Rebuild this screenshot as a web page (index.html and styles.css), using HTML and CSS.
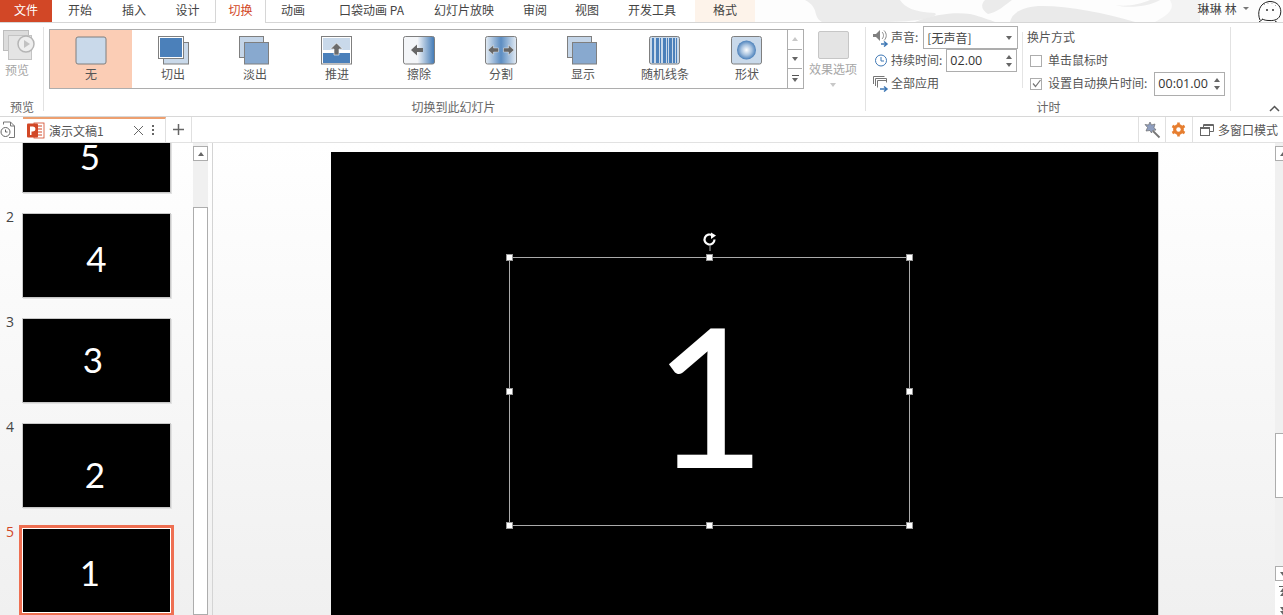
FILE: index.html
```html
<!DOCTYPE html>
<html lang="zh">
<head>
<meta charset="utf-8">
<title>演示文稿1</title>
<link rel="stylesheet" href="styles.css">
</head>
<body>
<div class="app">
  <header class="tabbar">
    <svg class="ink" width="450" height="22" viewBox="0 0 450 22"><path d="M55 0H150C155 8 165 12 185 13C190 17 170 22 130 22H72C62 16 70 8 55 0Z" fill="#ececec"/><path d="M165 22C185 14 205 12 220 14C232 17 240 20 245 22Z" fill="#e9e9e9"/><path d="M235 0H262C255 5 248 12 238 14C232 10 230 5 235 0Z" fill="#ebebeb"/><path d="M260 22C262 12 275 6 292 6C320 6 355 13 385 22Z" fill="#eaeaea"/><path d="M365 5C378 7 390 4 400 0H410C400 6 380 9 365 5Z" fill="#ededed"/><path d="M420 0H450V22H405C420 14 425 8 420 0Z" fill="#f3f3f3"/></svg>
    <div class="tab tab-file">文件</div>
    <div class="tab w-start">开始</div>
    <div class="tab w-insert">插入</div>
    <div class="tab w-design">设计</div>
    <div class="tab tab-active">切换</div>
    <div class="tab w-anim">动画</div>
    <div class="tab w-pocket">口袋动画 PA</div>
    <div class="tab w-show">幻灯片放映</div>
    <div class="tab w-review">审阅</div>
    <div class="tab w-view">视图</div>
    <div class="tab w-dev">开发工具</div>
    <div class="tab tab-format">格式</div>
    <div class="user">
      <span class="user-name">琳琳 林</span>
      <span class="user-caret"></span>
      <svg class="avatar" width="25" height="23" viewBox="0 0 25 23"><path d="M3 20C0 13 2 3 12 1.500C21 1 25 8 23.500 14C22.500 19 18 21 12 20.500C9 20.500 7 20 5.500 19" fill="#fff" stroke="#222" stroke-width="1"/><path d="M2 22l4-3M18 21l3 2" stroke="#222"/><circle cx="10" cy="10" r="1" fill="#333"/><circle cx="16" cy="10" r="1" fill="#333"/><path d="M7 4l1 1M11 3v1M15 3v1M19 5l-1 1" stroke="#888" stroke-width=".7"/></svg>
    </div>
  </header>

  <section class="ribbon">
    <div class="group group-preview">
      <div class="group-body preview-body">
        <svg width="32" height="31" viewBox="0 0 32 31"><rect x=".5" y=".5" width="25" height="20" fill="#dcdcdc" stroke="#bdbdbd"/><rect x="5.500" y="5.500" width="23" height="24" fill="#e4e4e4" stroke="#c4c4c4"/><circle cx="23" cy="14" r="8" fill="#eee" stroke="#b5b5b5" stroke-width="1.500"/><path d="M21 10l6 4-6 4z" fill="#c2c2c2"/></svg>
        <span class="muted-label">预览</span>
      </div>
      <div class="group-label">预览</div>
    </div>

    <div class="group group-gallery">
      <div class="group-body gallery-row">
        <div class="gallery">
          <div class="g-item g-selected">
            <svg width="32" height="29" viewBox="0 0 32 29"><rect x="1" y="1" width="30" height="27" rx="2" fill="#c9d9ea" stroke="#7f7f7f"/></svg>
            <span>无</span>
          </div>
          <div class="g-item">
            <svg width="32" height="29" viewBox="0 0 32 29"><rect x="6.500" y="6.500" width="25" height="21.500" fill="#c9d9ea" stroke="#7f7f7f"/><rect x="1.500" y=".5" width="25" height="22" fill="#fff" stroke="#7f7f7f"/><rect x="3" y="2" width="22" height="19" fill="#4b80ba"/></svg>
            <span>切出</span>
          </div>
          <div class="g-item">
            <svg width="32" height="29" viewBox="0 0 32 29"><rect x=".5" y=".5" width="24" height="21" fill="#c4d5e8" stroke="#7f7f7f"/><rect x="5.500" y="6.500" width="24" height="21.500" fill="#88a9cf" stroke="#7f7f7f"/></svg>
            <span>淡出</span>
          </div>
          <div class="g-item">
            <svg width="32" height="29" viewBox="0 0 32 29"><rect x=".5" y=".5" width="30" height="27.500" fill="#fff" stroke="#7f7f7f"/><rect x="2" y="2" width="27" height="12" fill="#c9d9ea"/><rect x="2" y="17" width="27" height="10" fill="#4b80ba"/><path d="M15.500 7l6 6h-3.500v6h-5v-6h-3.500z" fill="#6b6b6b" stroke="#fff" stroke-width=".6"/></svg>
            <span>推进</span>
          </div>
          <div class="g-item">
            <svg width="32" height="29" viewBox="0 0 32 29"><defs><linearGradient id="wipe"><stop offset=".45" stop-color="#f3f5f8"/><stop offset="1" stop-color="#3f78b5"/></linearGradient></defs><rect x=".5" y=".5" width="31" height="27.500" rx="2" fill="url(#wipe)" stroke="#7f7f7f"/><path d="M8 14l6-5.500v3.500h6v4h-6v3.500z" fill="#666"/></svg>
            <span>擦除</span>
          </div>
          <div class="g-item">
            <svg width="32" height="29" viewBox="0 0 32 29"><defs><linearGradient id="split"><stop offset="0" stop-color="#e4ecf4"/><stop offset=".5" stop-color="#5c8dc2"/><stop offset="1" stop-color="#e4ecf4"/></linearGradient></defs><rect x=".5" y=".5" width="31" height="27.500" rx="2" fill="url(#split)" stroke="#7f7f7f"/><path d="M3 14l5.500-5v3h5v4h-5v3zM29 14l-5.500-5v3h-5v4h5v3z" fill="#666" stroke="#fff" stroke-width=".4"/></svg>
            <span>分割</span>
          </div>
          <div class="g-item">
            <svg width="32" height="29" viewBox="0 0 32 29"><rect x=".5" y=".5" width="24" height="21" fill="#c4d5e8" stroke="#7f7f7f"/><rect x="5.500" y="6.500" width="24" height="21.500" fill="#88a9cf" stroke="#7f7f7f"/></svg>
            <span>显示</span>
          </div>
          <div class="g-item">
            <svg width="32" height="29" viewBox="0 0 32 29"><rect x=".5" y=".5" width="30" height="27.500" rx="2" fill="#c9d9ea" stroke="#7f7f7f"/><path d="M3 2h2v25H3zM7 2h3v25H7zM11 2h1v25h-1zM14 2h3v25h-3zM18 2h1v25h-1zM20 2h3v25h-3zM24 2h2v25h-2zM27 2h1v25h-1z" fill="#4b80ba"/></svg>
            <span>随机线条</span>
          </div>
          <div class="g-item">
            <svg width="32" height="29" viewBox="0 0 32 29"><defs><radialGradient id="shape"><stop offset="0" stop-color="#fff"/><stop offset=".55" stop-color="#a8c3e0"/><stop offset="1" stop-color="#4b80ba"/></radialGradient></defs><rect x=".5" y=".5" width="30" height="27.500" rx="2" fill="#c9d9ea" stroke="#7f7f7f"/><circle cx="15.500" cy="14" r="9.500" fill="url(#shape)"/></svg>
            <span>形状</span>
          </div>
          <div class="g-scroll">
            <div class="g-btn"><span class="tri-up tri-light"></span></div>
            <div class="g-btn"><span class="tri-down"></span></div>
            <div class="g-btn g-more"><span class="more-bar"></span><span class="tri-down"></span></div>
          </div>
        </div>
        <div class="effect">
          <span class="effect-icon"></span>
          <span class="muted-label">效果选项</span>
          <span class="tri-down tri-light"></span>
        </div>
      </div>
      <div class="group-label label-gallery">切换到此幻灯片</div>
    </div>

    <div class="group group-timing">
      <div class="group-body timing">
        <div class="timing-col">
          <div class="t-row">
            <svg class="t-icon" width="17" height="18" viewBox="0 0 17 18"><path d="M1 5h3l4-4v11l-4-4H1z" fill="#808080"/><path d="M10 3c2 2 2 5 0 7M12 1.500c3 3 3 7 0 10" stroke="#888" fill="none"/><path d="M9 15h5M12 12.500l3 2.500-3 2.500" stroke="#3f78b5" stroke-width="1.500" fill="none"/></svg>
            <span class="t-text">声音:</span>
            <div class="field field-select"><span>[无声音]</span><span class="tri-down"></span></div>
          </div>
          <div class="t-row">
            <svg class="t-icon" width="17" height="17" viewBox="0 0 17 17"><circle cx="9" cy="8.500" r="5.500" fill="none" stroke="#3f78b5"/><path d="M9 5v4h3" fill="none" stroke="#3f78b5"/></svg>
            <span class="t-text">持续时间:</span>
            <div class="field field-short"><span class="num">02.00</span><span class="spin"><span class="tri-up"></span><span class="tri-down"></span></span></div>
          </div>
          <div class="t-row">
            <svg class="t-icon" width="17" height="17" viewBox="0 0 17 17"><path d="M1.500 9V1.500h11M3.500 11V3.500h11v4M5.500 12.500V5.500H14" fill="none" stroke="#777"/><path d="M8 14h6M12 11.500l3 2.500-3 2.500" stroke="#3f78b5" stroke-width="1.500" fill="none"/></svg>
            <span class="t-text">全部应用</span>
          </div>
        </div>
        <div class="timing-col2">
          <div class="t-row"><span class="t-text">换片方式</span></div>
          <div class="t-row check-row"><span class="check"></span><span class="t-text">单击鼠标时</span></div>
          <div class="t-row check-row">
            <span class="check"><svg width="11" height="11" viewBox="0 0 11 11"><path d="M2 5.500l2.500 3L9.500 2" fill="none" stroke="#777" stroke-width="1.200"/></svg></span>
            <span class="t-text">设置自动换片时间:</span>
            <div class="field field-time"><span class="num">00:01.00</span><span class="spin"><span class="tri-up"></span><span class="tri-down"></span></span></div>
          </div>
        </div>
      </div>
      <div class="group-label">计时</div>
    </div>

    <div class="ribbon-end">
      <svg width="11" height="7" viewBox="0 0 11 7"><path d="M1 6l4.500-4.500L10 6" fill="none" stroke="#555" stroke-width="1.500"/></svg>
    </div>
  </section>

  <nav class="docbar">
    <div class="doc-history">
      <svg width="16" height="18" viewBox="0 0 16 18"><path d="M3.500 3.500V1h7l4 4v11.500H9" fill="none" stroke="#777"/><path d="M10.500 1v4h4" fill="none" stroke="#777"/><circle cx="5.500" cy="11" r="4.500" fill="#fff" stroke="#666"/><path d="M5.500 8.500V11h2" fill="none" stroke="#666"/></svg>
    </div>
    <div class="doc-tab">
      <svg width="18" height="17" viewBox="0 0 18 17"><rect x="7" y="1" width="10" height="15" fill="#fff" stroke="#d24726" stroke-width=".8"/><path d="M10 4h5M10 7h5M10 10h5M10 13h5" stroke="#d24726"/><rect y="1.500" width="11" height="14" rx="1" fill="#d24726"/><path d="M3 4.500h3a2.200 2.200 0 0 1 0 5H4.500V13H3z" fill="#fff"/></svg>
      <span class="doc-name">演示文稿1</span>
      <svg class="doc-close" width="11" height="11" viewBox="0 0 11 11"><path d="M1 1l9 9M10 1l-9 9" stroke="#666"/></svg>
      <span class="doc-dots"></span>
    </div>
    <div class="doc-add">
      <svg width="13" height="13" viewBox="0 0 13 13"><path d="M6.500 1v11M1 6.500h11" stroke="#666" stroke-width="1.500"/></svg>
    </div>
    <div class="doc-spacer"></div>
    <div class="doc-tool">
      <svg width="18" height="18" viewBox="0 0 18 18"><path d="M7 1l1.500 3 3.500-1-1 3.500 2 2.500-3.500.5L8.500 12 7 9.500 3 10l1.500-3.500L2 3.500l3.500.5z" fill="#8f9fc0" stroke="#6f6f6f" stroke-width=".7"/><path d="M10 10l6.500 6.500" stroke="#777" stroke-width="1.800"/></svg>
    </div>
    <div class="doc-tool">
      <svg width="15" height="15" viewBox="0 0 15 15"><circle cx="7.500" cy="7.500" r="3.800" fill="none" stroke="#e67e30" stroke-width="3.200"/><path d="M7.500 .5v14M1.400 4l12.200 7M1.400 11l12.200-7" stroke="#e67e30" stroke-width="2.600"/><circle cx="7.500" cy="7.500" r="2.200" fill="#fff"/></svg>
    </div>
    <div class="doc-windows">
      <svg width="14" height="12" viewBox="0 0 14 12"><rect x=".5" y="3.500" width="9" height="8" fill="#fff" stroke="#666"/><path d="M3.500 3V.5h10v7H10" fill="none" stroke="#666"/><path d="M.5 4.500h9M3.500 1.500h10" stroke="#666"/></svg>
      <span>多窗口模式</span>
    </div>
  </nav>

  <main class="workspace">
    <aside class="panel">
      <div class="thumbs">
        <div class="t-item"><span class="t-num t-num-hidden">1</span><div class="thumb"><span class="digit d5">5</span></div></div>
        <div class="t-item"><span class="t-num">2</span><div class="thumb"><span class="digit d4">4</span></div></div>
        <div class="t-item"><span class="t-num">3</span><div class="thumb"><span class="digit d3">3</span></div></div>
        <div class="t-item"><span class="t-num">4</span><div class="thumb"><span class="digit d2">2</span></div></div>
        <div class="t-item t-active"><span class="t-num">5</span><div class="thumb"><span class="digit d1">1</span></div></div>
      </div>
      <div class="vscroll">
        <div class="sb-btn"><span class="tri-up"></span></div>
        <div class="sb-gap-left"></div>
        <div class="sb-thumb sb-thumb-left"></div>
      </div>
    </aside>
    <section class="canvas">
      <div class="slide">
        <div class="selection">
          <div class="rotate">
            <svg width="16" height="19" viewBox="0 0 16 19"><path d="M12.500 7.500a5 5 0 1 1-2-4" fill="none" stroke="#fff" stroke-width="2.200"/><path d="M9 0.500l5 3-5 3.500z" fill="#fff"/><path d="M8 13v6" stroke="#aaa"/></svg>
          </div>
          <span class="h h-tl"></span><span class="h h-tc"></span><span class="h h-tr"></span>
          <span class="h h-ml"></span><span class="h h-mr"></span>
          <span class="h h-bl"></span><span class="h h-bc"></span><span class="h h-br"></span>
          <span class="big">1</span>
        </div>
      </div>
    </section>
    <div class="rscroll">
      <div class="rscroll-inner">
        <div class="sb-btn"><span class="tri-up"></span></div>
        <div class="sb-gap-a"></div>
        <div class="sb-thumb sb-thumb-right"></div>
        <div class="sb-gap-b"></div>
        <div class="sb-btn"><span class="tri-down"></span></div>
        <div class="page-btn"><span class="bar-d"></span><span class="tri-up"></span><span class="tri-up"></span></div>
        <div class="page-btn"><span class="tri-down"></span><span class="tri-down"></span></div>
      </div>
    </div>
  </main>
</div>
</body>
</html>
```
FILE: styles.css
```css
* { box-sizing: border-box; }
html, body { margin: 0; padding: 0; height: 100%; overflow: hidden; }
body {
  font-family: "Noto Sans CJK SC", "Open Sans", sans-serif;
  font-size: 12px;
  color: #444;
  background: #fff;
}
svg { display: block; flex: none; }
.app { width: 1283px; height: 615px; display: flex; flex-direction: column; overflow: hidden; }

/* top tabs */
.tabbar {
  height: 23px; flex: none; display: flex; align-items: stretch; position: relative;
  border-bottom: 1px solid #d6d6d6;
  background: #fdfdfd;
}
.ink { position: absolute; left: 750px; top: 0; }
.tab { display: flex; align-items: center; justify-content: center; height: 22px; background: #fff; color: #444; white-space: nowrap; padding-bottom: 3px; position: relative; }
.tab-file { width: 52px; background: #d24726; color: #fff; }
.w-start { width: 56px; }
.w-insert { width: 52px; }
.w-design { width: 55px; }
.tab-active { width: 51px; height: 23px; color: #d24726; border: 1px solid #d6d6d6; border-width: 0 1px; padding-bottom: 4px; }
.w-anim { width: 54px; }
.w-pocket { width: 103px; }
.w-show { width: 82px; }
.w-review { width: 60px; }
.w-view { width: 44px; }
.w-dev { width: 86px; }
.tab-format { width: 60px; background: #fdf3ea; }
.user { flex: 1; display: flex; align-items: center; justify-content: flex-end; padding-right: 1px; overflow: hidden; height: 22px; position: relative; }
.user-name { letter-spacing: .2px; padding-bottom: 6px; }
.user-caret { width: 0; height: 0; border: 3px solid transparent; border-top: 3px solid #777; margin: 0 8px 3px 6px; }

/* ribbon */
.ribbon { height: 94px; flex: none; display: flex; background: #fff; border-bottom: 1px solid #d8d8d8; }
.group { display: flex; flex-direction: column; position: relative; }
.group-body { flex: 1; min-height: 0; }
.group-label { height: 20px; flex: none; display: flex; align-items: center; justify-content: center; color: #666; }
.label-gallery { padding-right: 3px; }
.group-preview { width: 44px; border-right: 0; }
.group-preview::after, .group-gallery::after, .group-timing::after {
  content: ""; position: absolute; right: 0; top: 4px; bottom: 5px; width: 1px; background: #e2e2e2;
}
.preview-body { display: flex; flex-direction: column; align-items: flex-start; padding: 7px 0 0 3px; }
.muted-label { color: #a6a6a6; line-height: 17px; }
.preview-body .muted-label { margin: 0 0 0 2px; }
.group-gallery { width: 822px; }
.gallery-row { display: flex; padding: 6px 0 0 5px; }
.gallery { width: 755px; height: 60px; display: flex; border: 1px solid #adadad; flex: none; }
.g-item { width: 82px; flex: none; display: flex; flex-direction: column; align-items: center; padding-top: 6px; color: #555; line-height: 17px; font-size: 12px; }
.g-selected { background: #fbcdb5; }
.g-scroll { width: 15px; margin-left: -1px; display: flex; flex-direction: column; border-left: 1px solid #adadad; flex: none; }
.g-btn { flex: 1; display: flex; flex-direction: column; align-items: center; justify-content: center; gap: 2px; border-bottom: 1px solid #adadad; }
.g-btn:last-child { border-bottom: 0; }
.more-bar { width: 7px; height: 1px; background: #555; }
.effect { width: 52px; margin-left: 3px; display: flex; flex-direction: column; align-items: center; padding-top: 2px; }
.effect-icon { width: 31px; height: 28px; background: #e4e4e4; border: 1px solid #c6c6c6; border-radius: 2px; }
.effect .muted-label { margin-top: 1px; white-space: nowrap; }
.effect .tri-down { margin-top: 6px; }

.tri-up, .tri-down { display: block; width: 0; height: 0; border-left: 3.500px solid transparent; border-right: 3.500px solid transparent; flex: none; }
.tri-up { border-bottom: 4px solid #666; }
.tri-down { border-top: 4px solid #666; }
.tri-up.tri-light { border-bottom-color: #c8c8c8; }
.tri-down.tri-light { border-top-color: #c8c8c8; }

/* timing */
.group-timing { width: 365px; }
.timing { display: flex; padding: 3px 0 0 6px; }
.timing-col { width: 146px; flex: none; }
.t-row { height: 23px; display: flex; align-items: center; white-space: nowrap; }
.t-icon { margin-right: 2px; }
.t-text { color: #555; line-height: 17px; padding-bottom: 2px; }
.field { height: 23px; border: 1px solid #adadad; display: flex; align-items: center; justify-content: space-between; padding: 0 4px 0 3px; background: #fff; color: #444; }
.field-select { width: 95px; margin-left: 5px; padding-right: 5px; }
.field-short { width: 71px; margin-left: 4px; }
.field-time { width: 71px; margin-left: 7px; height: 24px; }
.num { font-family: "Open Sans", sans-serif; font-size: 12.500px; color: #333; }
.spin { display: flex; flex-direction: column; gap: 4px; }
.timing-col2 { margin-left: 4px; padding-left: 5px; position: relative; }
.timing-col2::before { content: ""; position: absolute; left: 0; top: 6px; height: 56px; width: 1px; background: #e4e4e4; }
.check-row { padding-left: 3px; }
.check { width: 12px; height: 12px; border: 1px solid #adadad; margin-right: 6px; display: flex; align-items: center; justify-content: center; flex: none; }
.ribbon-end { flex: 1; display: flex; align-items: flex-end; justify-content: flex-end; padding: 0 3px 4px 0; }

/* doc bar */
.docbar { height: 26px; flex: none; display: flex; align-items: stretch; background: #fff; border-bottom: 1px solid #e2e2e2; }
.doc-history { width: 23px; display: flex; align-items: center; padding-left: 0; }
.doc-tab { width: 143px; display: flex; align-items: center; border-top: 2px solid #eda070; border-right: 1px solid #e0e0e0; padding: 0 0 1px 4px; }
.doc-name { margin-left: 4px; color: #555; width: 84px; flex: none; }
.doc-dots { width: 2px; height: 2px; margin-left: 8px; background: #666; box-shadow: 0 -4px 0 #666, 0 4px 0 #666; }
.doc-add { width: 26px; display: flex; align-items: center; justify-content: center; border-right: 1px solid #e0e0e0; }
.doc-spacer { flex: 1; }
.doc-tool { width: 27px; display: flex; align-items: center; justify-content: center; border-left: 1px solid #e0e0e0; }
.doc-tool:first-of-type { padding-right: 3px; }
.doc-tool + .doc-tool { padding-right: 1px; }
.doc-windows { width: 91px; display: flex; align-items: center; gap: 4px; padding-left: 7px; border-left: 1px solid #e0e0e0; color: #555; white-space: nowrap; }

/* workspace */
.workspace { flex: 1; min-height: 0; display: flex; background: linear-gradient(#fff, #f0f0f0); overflow: hidden; }
.panel { width: 213px; flex: none; display: flex; border-right: 1px solid #d4d4d4; }
.thumbs { width: 193px; flex: none; margin-top: -35px; display: flex; flex-direction: column; gap: 20px; }
.t-item { display: flex; height: 85px; flex: none; }
.t-num { width: 22px; flex: none; padding-left: 6px; font-family: "Open Sans", sans-serif; font-size: 14px; line-height: 8px; color: #444; }
.t-num-hidden { visibility: hidden; }
.thumb { width: 149px; height: 85px; background: #000; border: 1px solid #c8c8c8; box-shadow: 1px 1px 0 #e2e2e2; display: flex; align-items: center; justify-content: center; }
.t-active .t-num { color: #d24726; }
.t-active .thumb { border-color: #fff; outline: 3px solid #ee6f52; box-shadow: none; }
.digit { font-family: Lato, sans-serif; font-size: 35px; line-height: 26px; color: #fff; }
.d5 { margin: 11px 13px 0 0; }
.d4 { margin: 5px 0 0 0; }
.d3 { margin: -3px 7px 0 0; }
.d2 { margin: 17px 3px 0 0; }
.d1 { margin: 3px 13px 0 0; }

.vscroll { width: 15px; flex: none; display: flex; flex-direction: column; padding-top: 3px; background: #f0f0f0; }
.sb-btn { height: 15px; width: 15px; flex: none; border: 1px solid #adadad; background: #fff; display: flex; align-items: center; justify-content: center; }
.sb-gap-left { height: 46px; flex: none; }
.sb-thumb { width: 15px; background: #fff; border: 1px solid #adadad; flex: none; }
.sb-thumb-left { flex: 1; }

.canvas { flex: 1; min-width: 0; padding: 9px 0 0 118px; overflow: hidden; }
.slide { width: 828px; height: 480px; background: #000; border-right: 1px solid #c4c4c4; position: relative; }
.selection { position: absolute; left: 178px; top: 105px; width: 401px; height: 269px; border: 1px solid #aaa; display: flex; align-items: center; justify-content: center; }
.big { font-family: Lato, sans-serif; font-size: 195px; line-height: 1; color: #fff; margin: -2px 0 0 0; padding: 6px 0 0 0; }
.rotate { position: absolute; left: 192px; top: -26px; }
.h { position: absolute; width: 7px; height: 7px; background: #fff; border: 1px solid #999; }
.h-tl { left: -4px; top: -4px; }
.h-tc { left: 196px; top: -4px; }
.h-tr { right: -4px; top: -4px; }
.h-ml { left: -4px; top: 130px; }
.h-mr { right: -4px; top: 130px; }
.h-bl { left: -4px; bottom: -4px; }
.h-bc { left: 196px; bottom: -4px; }
.h-br { right: -4px; bottom: -4px; }

.rscroll { width: 8px; flex: none; overflow: hidden; }
.rscroll-inner { width: 15px; height: 472px; display: flex; flex-direction: column; padding-top: 3px; background: #f0f0f0; }
.sb-gap-a { height: 272px; flex: none; }
.sb-thumb-right { height: 65px; }
.sb-gap-b { height: 68px; flex: none; }
.page-btn { height: 20px; width: 15px; flex: none; background: #fff; display: flex; flex-direction: column; align-items: center; justify-content: center; }
.bar-d { width: 7px; height: 1px; background: #666; margin-bottom: 1px; }
```
